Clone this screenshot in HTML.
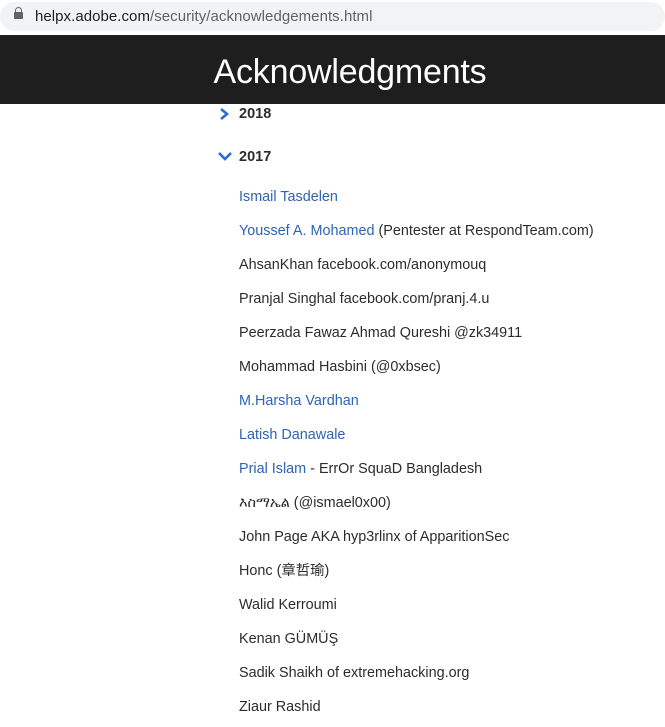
<!DOCTYPE html>
<html><head><meta charset="utf-8"><style>
body{margin:0;width:665px;height:727px;overflow:hidden;background:#fff;font-family:"Liberation Sans","Noto Sans CJK SC",sans-serif;}
.bar{position:absolute;left:0;top:0;width:665px;height:34px;background:#fff;}
.pill{position:absolute;left:0;top:2px;width:665px;height:29px;background:#f1f3f4;border-radius:15px;}
.lock{position:absolute;left:14px;top:12px;width:9px;height:7px;background:#5f6368;border-radius:1px;}
.lock:before{content:"";position:absolute;left:1px;top:-5px;width:5px;height:5px;border:1.5px solid #5f6368;border-bottom:none;border-radius:4px 4px 0 0;}
.url{position:absolute;left:35px;top:8px;font-size:15px;color:#202124;letter-spacing:0.05px}
.url span{color:#5f6368}
.hd{position:absolute;left:0;top:35px;width:665px;height:69px;background:#1e1e1e;}
.hd div{position:absolute;left:0;width:700px;text-align:center;top:18px;color:#fff;font-size:34px;letter-spacing:-0.2px}
.yr{position:absolute;left:239px;font-size:14.5px;font-weight:bold;color:#2c2c2c;line-height:18px}
.chev{position:absolute;left:218px;}
.it{position:absolute;left:239px;font-size:14.4px;color:#2c2c2c;white-space:nowrap;line-height:18px;height:18px}
a{color:#2d64b3;text-decoration:none}
</style></head><body>
<div class="bar"><div class="pill"></div><div class="lock"></div><div class="url">helpx.adobe.com<span>/security/acknowledgements.html</span></div></div>
<div class="hd"><div>Acknowledgments</div></div>
<svg class="chev" style="top:107px" width="12" height="14"><path d="M3 2 L9 7 L3 12" stroke="#2d6ad6" stroke-width="2.6" fill="none"/></svg>
<div class="yr" style="top:105px">2018</div>
<svg class="chev" style="top:151px" width="14" height="10"><path d="M1 2 L7 8 L13 2" stroke="#2d6ad6" stroke-width="2.6" fill="none"/></svg>
<div class="yr" style="top:148px">2017</div>
<div class="it" style="top:188px"><a>Ismail Tasdelen</a></div>
<div class="it" style="top:222px"><a>Youssef A. Mohamed</a> (Pentester at RespondTeam.com)</div>
<div class="it" style="top:256px">AhsanKhan facebook.com/anonymouq</div>
<div class="it" style="top:290px">Pranjal Singhal facebook.com/pranj.4.u</div>
<div class="it" style="top:324px">Peerzada Fawaz Ahmad Qureshi @zk34911</div>
<div class="it" style="top:358px">Mohammad Hasbini (@0xbsec)</div>
<div class="it" style="top:392px"><a>M.Harsha Vardhan</a></div>
<div class="it" style="top:426px"><a>Latish Danawale</a></div>
<div class="it" style="top:460px"><a>Prial Islam</a> - ErrOr SquaD Bangladesh</div>
<div class="it" style="top:494px">እስማኤል (@ismael0x00)</div>
<div class="it" style="top:528px">John Page AKA hyp3rlinx of ApparitionSec</div>
<div class="it" style="top:562px">Honc (章哲瑜)</div>
<div class="it" style="top:596px">Walid Kerroumi</div>
<div class="it" style="top:630px">Kenan GÜMÜŞ</div>
<div class="it" style="top:664px">Sadik Shaikh of extremehacking.org</div>
<div class="it" style="top:698px">Ziaur Rashid</div>
</body></html>
